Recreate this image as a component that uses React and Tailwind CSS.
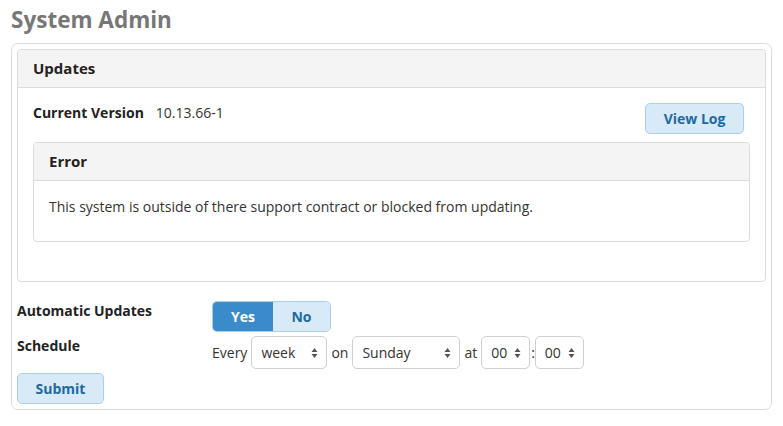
import { useState } from "react";

const Arrows = () => (
  <svg width="7" height="12" viewBox="0 0 7 12" className="absolute right-[9px] top-1/2 -translate-y-1/2 pointer-events-none">
    <path d="M3.5 1 L6.5 5 L0.5 5 Z" fill="#555" />
    <path d="M3.5 11 L6.5 7 L0.5 7 Z" fill="#555" />
  </svg>
);

function Select({ w, value, options }) {
  return (
    <div className="relative" style={{ width: w }}>
      <select
        defaultValue={value}
        className="appearance-none w-full h-[33px] pl-[9px] pr-5 text-[14px] text-[#333] bg-white border border-[#cfcfcf] rounded-[5px] outline-none"
      >
        {options.map((o) => (
          <option key={o}>{o}</option>
        ))}
      </select>
      <Arrows />
    </div>
  );
}

function Panel({ title, className = "", children }) {
  return (
    <div className={"border border-[#dcdcdc] rounded-[4px] bg-white " + className}>
      <div className="h-[38px] flex items-center px-[15px] bg-[#f4f4f4] border-b border-[#dcdcdc] rounded-t-[4px] text-[15px] font-bold text-[#222]">
        {title}
      </div>
      {children}
    </div>
  );
}

export default function App() {
  const [auto, setAuto] = useState(true);
  return (
    <div className="w-[783px] h-[426px] bg-white text-[#333] font-['Open_Sans',sans-serif]">
      <h1 className="pl-[11px] pt-[5px] h-[43px] text-[22.5px] font-bold text-[#777] leading-[30px]">System Admin</h1>
      <div className="ml-[11px] w-[761px] border border-[#dcdcdc] rounded-[7px] p-[5px]">
        <Panel title="Updates">
          <div className="px-[15px] pt-[15px] pb-[39px]">
            <div className="flex items-start justify-between">
              <div className="flex items-center gap-[12px] text-[14px] leading-[19px]">
                <span className="font-bold text-[#222]">Current Version</span>
                <span>10.13.66-1</span>
              </div>
              <button className="mr-[6px] w-[99px] h-[31px] rounded-[5px] bg-[#d8e9f7] border border-[#a9cfec] text-[#1d6aa1] text-[14px] font-bold">
                View Log
              </button>
            </div>
            <Panel title="Error" className="mt-[8px]">
              <div className="h-[60px] px-[15px] flex items-center text-[14px] text-[#333] pb-[9px]">
                This system is outside of there support contract or blocked from updating.
              </div>
            </Panel>
          </div>
        </Panel>

        <div className="mt-[19px] flex items-start">
          <div className="w-[195px] text-[14px] font-bold text-[#222] leading-[19px]">Automatic Updates</div>
          <div className="flex h-[31px] rounded-[5px] border border-[#a9cfec] overflow-hidden text-[14px] font-bold">
            <button
              onClick={() => setAuto(true)}
              className={"w-[60px] " + (auto ? "bg-[#3a8bcb] text-white" : "bg-[#d8e9f7] text-[#1d6aa1]")}
            >
              Yes
            </button>
            <button
              onClick={() => setAuto(false)}
              className={"w-[57px] " + (!auto ? "bg-[#3a8bcb] text-white" : "bg-[#d8e9f7] text-[#1d6aa1]")}
            >
              No
            </button>
          </div>
        </div>

        <div className="mt-[4px] flex items-start">
          <div className="w-[195px] text-[14px] font-bold text-[#222] leading-[19px]">Schedule</div>
          <div className="flex items-center gap-[4px] text-[14px] text-[#333]">
            <span>Every</span>
            <Select w={76} value="week" options={["day", "week", "month"]} />
            <span>on</span>
            <Select w={108} value="Sunday" options={["Sunday", "Monday", "Tuesday", "Wednesday", "Thursday", "Friday", "Saturday"]} />
            <span>at</span>
            <Select w={49} value="00" options={["00", "01", "02", "03"]} />
            <span className="ml-[-3px] mr-[-4px]">:</span>
            <Select w={49} value="00" options={["00", "15", "30", "45"]} />
          </div>
        </div>

        <button className="mt-[4px] w-[87px] h-[31px] rounded-[5px] bg-[#d8e9f7] border border-[#a9cfec] text-[#1d6aa1] text-[14px] font-bold">
          Submit
        </button>
      </div>
    </div>
  );
}
